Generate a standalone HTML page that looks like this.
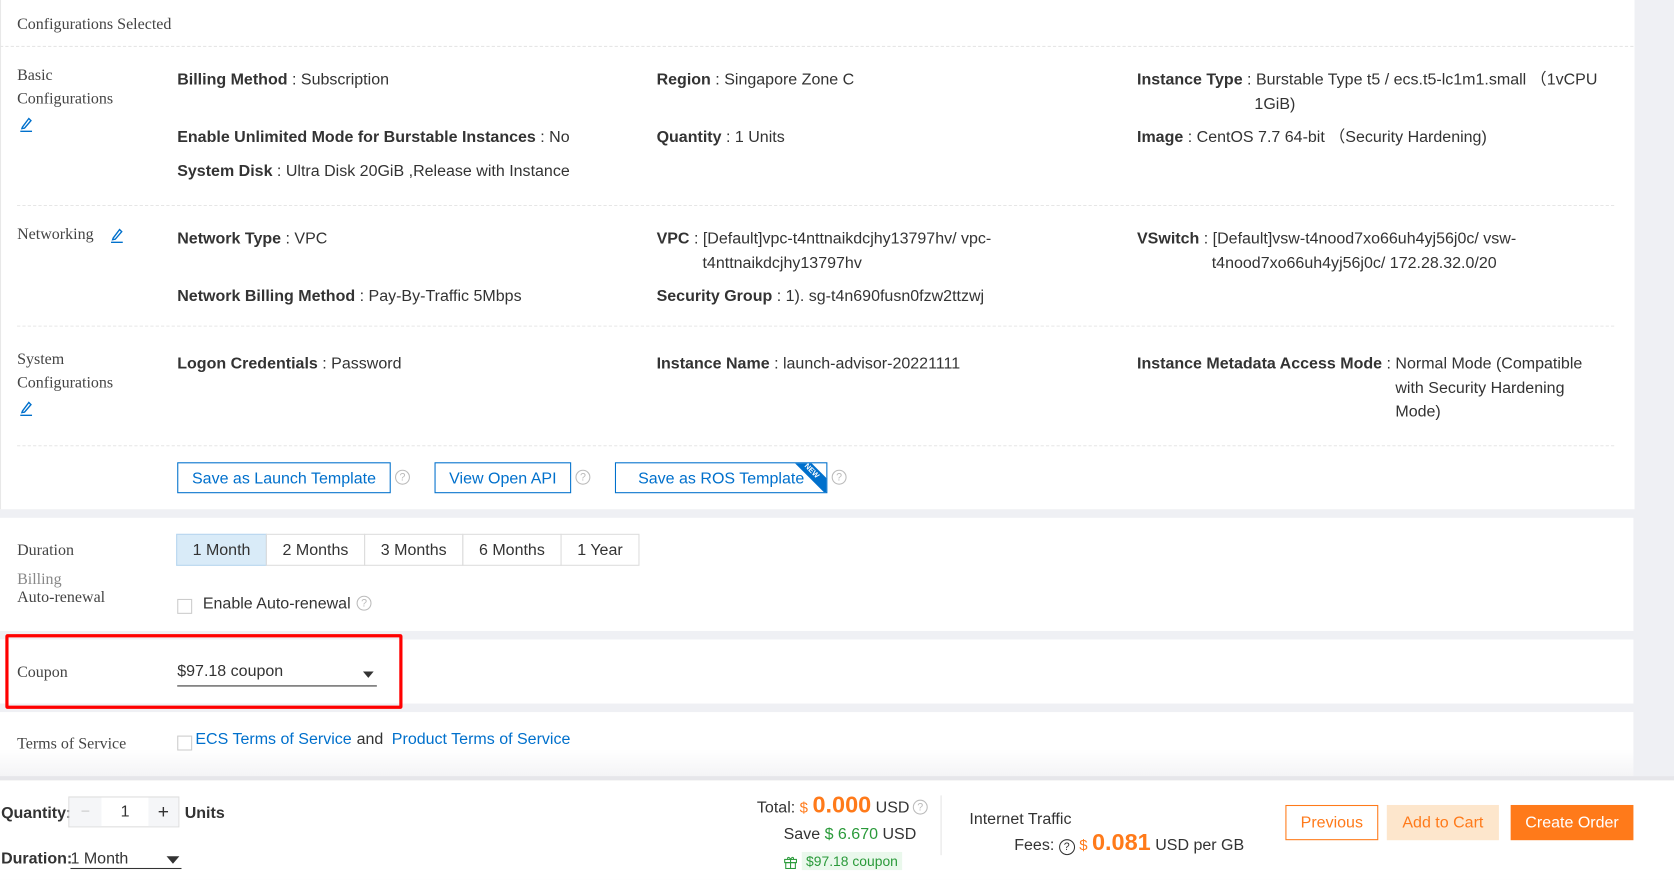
<!DOCTYPE html>
<html><head><meta charset="utf-8"><style>
html,body{margin:0;padding:0;width:1674px;height:880px;overflow:hidden;background:#fff}
#w{position:absolute;left:0;top:0;width:1568px;height:824px;transform:scale(1.0676);transform-origin:0 0;background:#eff0f4;font-family:"Liberation Sans",sans-serif;font-size:15px;color:#333}
.a{position:absolute;white-space:nowrap}
.p{position:absolute;left:0;width:1530px;background:#fff}
.lab{position:absolute;font-family:"Liberation Serif",serif;font-size:15px;color:#444;line-height:22px}
.sep{position:absolute;left:0;height:0;border-top:1px dashed #e6e6e6}
b{font-weight:bold;color:#333}
.v{position:absolute;line-height:22.5px}
.btn{position:absolute;border:1px solid #0070cc;color:#0070cc;height:29px;line-height:29px;text-align:center;box-sizing:border-box;font-size:15px;background:#fff}
.q{position:absolute;width:14px;height:14px;border:1px solid #bbb;border-radius:50%;color:#bbb;font-size:10px;line-height:14px;text-align:center;box-sizing:border-box}
.tab{position:absolute;top:500px;height:30px;line-height:30px;border:1px solid #ddd;text-align:center;box-sizing:border-box;color:#333}
.pen{position:absolute}
</style></head><body><div id="w">
<div class="p" style="top:0;height:477px;border-left:1px solid #e8e8e8"></div>
<div class="p" style="top:485px;height:106px"></div>
<div class="p" style="top:599px;height:60px"></div>
<div class="p" style="top:667px;height:60px;background:linear-gradient(#fff 0,#fff 35px,#f4f4f6 60px)"></div>
<div style="position:absolute;left:0;top:727px;width:1568px;height:4px;background:#e6e6ea"></div>
<div style="position:absolute;left:0;top:731px;width:1568px;height:93px;background:#fff"></div>

<div class="a lab" style="left:16px;top:12px">Configurations Selected</div>
<div class="sep" style="top:43px;width:1530px"></div>

<div class="lab" style="left:16px;top:60px">Basic<br>Configurations</div>
<svg class="pen" style="left:17px;top:108px" width="16" height="16" viewBox="0 0 16 16"><path d="M4 11 L10 3 L12 5 L6 12 L3.5 12.5 Z" fill="none" stroke="#0070cc" stroke-width="1.3"/><path d="M2 15 H13" stroke="#0070cc" stroke-width="1.3"/></svg>
<div class="v a" style="left:166px;top:64px"><b>Billing Method</b> : Subscription</div>
<div class="v a" style="left:615px;top:64px"><b>Region</b> : Singapore Zone C</div>
<div class="v" style="left:1065px;top:64px;width:450px"><b>Instance Type</b> : Burstable Type t5 / ecs.t5-lc1m1.small （1vCPU<br><span style="padding-left:110px">1GiB)</span></div>
<div class="v a" style="left:166px;top:118px"><b>Enable Unlimited Mode for Burstable Instances</b> : No</div>
<div class="v a" style="left:615px;top:118px"><b>Quantity</b> : 1 Units</div>
<div class="v a" style="left:1065px;top:118px"><b>Image</b> : CentOS 7.7 64-bit （Security Hardening)</div>
<div class="v a" style="left:166px;top:150px"><b>System Disk</b> : Ultra Disk 20GiB ,Release with Instance</div>
<div class="sep" style="top:192px;left:16px;width:1496px"></div>

<div class="a lab" style="left:16px;top:209px">Networking</div>
<svg class="pen" style="left:102px;top:212px" width="16" height="16" viewBox="0 0 16 16"><path d="M4 11 L10 3 L12 5 L6 12 L3.5 12.5 Z" fill="none" stroke="#0070cc" stroke-width="1.3"/><path d="M2 15 H13" stroke="#0070cc" stroke-width="1.3"/></svg>
<div class="v a" style="left:166px;top:213px"><b>Network Type</b> : VPC</div>
<div class="v a" style="left:615px;top:213px"><b>VPC</b> : [Default]vpc-t4nttnaikdcjhy13797hv/ vpc-<br><span style="padding-left:43px">t4nttnaikdcjhy13797hv</span></div>
<div class="v a" style="left:1065px;top:213px"><b>VSwitch</b> : [Default]vsw-t4nood7xo66uh4yj56j0c/ vsw-<br><span style="padding-left:70px">t4nood7xo66uh4yj56j0c/ 172.28.32.0/20</span></div>
<div class="v a" style="left:166px;top:267px"><b>Network Billing Method</b> : Pay-By-Traffic 5Mbps</div>
<div class="v a" style="left:615px;top:267px"><b>Security Group</b> : 1). sg-t4n690fusn0fzw2ttzwj</div>
<div class="sep" style="top:305px;left:16px;width:1496px"></div>

<div class="lab" style="left:16px;top:326px">System<br>Configurations</div>
<svg class="pen" style="left:17px;top:374px" width="16" height="16" viewBox="0 0 16 16"><path d="M4 11 L10 3 L12 5 L6 12 L3.5 12.5 Z" fill="none" stroke="#0070cc" stroke-width="1.3"/><path d="M2 15 H13" stroke="#0070cc" stroke-width="1.3"/></svg>
<div class="v a" style="left:166px;top:330px"><b>Logon Credentials</b> : Password</div>
<div class="v a" style="left:615px;top:330px"><b>Instance Name</b> : launch-advisor-20221111</div>
<div class="v a" style="left:1065px;top:330px"><b>Instance Metadata Access Mode</b> : Normal Mode (Compatible<br><span style="padding-left:242px">with Security Hardening</span><br><span style="padding-left:242px">Mode)</span></div>
<div class="sep" style="top:417px;left:16px;width:1496px"></div>

<div class="btn" style="left:166px;top:433px;width:200px">Save as Launch Template</div>
<div class="q" style="left:370px;top:440px">?</div>
<div class="btn" style="left:407px;top:433px;width:128px">View Open API</div>
<div class="q" style="left:539px;top:440px">?</div>
<div class="btn" style="left:576px;top:433px;width:199px;overflow:hidden">Save as ROS Template
<div style="position:absolute;right:-14px;top:2px;width:56px;height:11px;background:#0070cc;color:#fff;font-size:7px;line-height:11px;transform:rotate(45deg);text-align:center;font-weight:bold">NEW</div></div>
<div class="q" style="left:779px;top:440px">?</div>

<div class="a lab" style="left:16px;top:505px">Duration</div>
<div class="tab" style="left:165px;width:85px;background:#d9ebf8;border-color:#b8d6ef">1 Month</div>
<div class="tab" style="left:249px;width:93px">2 Months</div>
<div class="tab" style="left:341px;width:93px">3 Months</div>
<div class="tab" style="left:433px;width:93px">6 Months</div>
<div class="tab" style="left:525px;width:74px">1 Year</div>
<div class="lab" style="left:16px;top:535px;line-height:17px"><span style="color:#888">Billing</span><br>Auto-renewal</div>
<div class="a" style="left:166px;top:561px;width:12px;height:12px;border:1px solid #ccc"></div>
<div class="a" style="left:190px;top:557px">Enable Auto-renewal</div>
<div class="q" style="left:334px;top:558px">?</div>

<div class="a" style="left:5px;top:594px;width:366px;height:64px;border:3px solid #f00;border-radius:2px"></div>
<div class="a lab" style="left:16px;top:619px">Coupon</div>
<div class="a" style="left:166px;top:620px">$97.18 coupon</div>
<div class="a" style="left:340px;top:629px;width:0;height:0;border-left:5px solid transparent;border-right:5px solid transparent;border-top:6px solid #333"></div>
<div class="a" style="left:166px;top:642px;width:187px;border-top:1px solid #333"></div>

<div class="a lab" style="left:16px;top:686px">Terms of Service</div>
<div class="a" style="left:166px;top:689px;width:12px;height:12px;border:1px solid #ccc"></div>
<div class="a" style="left:183px;top:684px;color:#0070cc">ECS Terms of Service</div>
<div class="a" style="left:334px;top:684px">and</div>
<div class="a" style="left:367px;top:684px;color:#0070cc">Product Terms of Service</div>

<div class="a" style="left:1px;top:753px;font-size:15px;font-weight:bold;color:#333">Quantity:</div>
<div class="a" style="left:64px;top:746px;width:104px;height:29px;border:1px solid #ddd;box-sizing:border-box">
<div class="a" style="left:0;top:0;width:30px;height:27px;background:#f5f6f8;color:#ccc;text-align:center;line-height:27px">−</div>
<div class="a" style="left:48px;top:0;line-height:27px">1</div>
<div class="a" style="left:74px;top:0;width:28px;height:27px;background:#f5f6f8;color:#333;text-align:center;line-height:27px;font-size:18px">+</div></div>
<div class="a" style="left:173px;top:753px;font-weight:bold">Units</div>
<div class="a" style="left:1px;top:796px;font-weight:bold">Duration: </div>
<div class="a" style="left:66px;top:796px">1 Month</div>
<div class="a" style="left:156px;top:802px;width:0;height:0;border-left:6px solid transparent;border-right:6px solid transparent;border-top:7px solid #333"></div>
<div class="a" style="left:66px;top:813px;width:104px;border-top:1px solid #333"></div>

<div class="a" style="left:709px;top:741px">Total: <span style="color:#ff7a1a;font-size:14px">$</span> <span style="color:#ff7a1a;font-size:22px;font-weight:bold">0.000</span> USD</div>
<div class="q" style="left:855px;top:749px">?</div>
<div class="a" style="left:734px;top:773px">Save <span style="color:#2a9a3a">$ 6.670</span> USD</div>
<svg class="a" style="left:734px;top:801px" width="13" height="13" viewBox="0 0 13 13"><rect x="1" y="4" width="11" height="3" fill="none" stroke="#2a9a3a"/><rect x="2" y="7" width="9" height="5.5" fill="none" stroke="#2a9a3a"/><path d="M6.5 4v8.5M6.5 4C5 1 3 2 4 4M6.5 4C8 1 10 2 9 4" fill="none" stroke="#2a9a3a"/></svg>
<div class="a" style="left:751px;top:798px;color:#2a9a3a;font-size:13px;background:#eaf8ec;padding:1px 4px">$97.18 coupon</div>
<div class="a" style="left:881px;top:745px;height:56px;border-left:1px solid #e5e5e5"></div>
<div class="a" style="left:908px;top:759px">Internet Traffic</div>
<div class="a" style="left:950px;top:776px">Fees: <span style="display:inline-block;width:13px;height:13px;border:1px solid #333;border-radius:50%;font-size:10px;line-height:13px;text-align:center">?</span> <span style="color:#ff7a1a;font-size:14px">$</span> <span style="color:#ff7a1a;font-size:22px;font-weight:bold">0.081</span> USD per GB</div>

<div class="a" style="left:1204px;top:754px;width:87px;height:33px;border:1px solid #ff7a1a;box-sizing:border-box;color:#ff7a1a;text-align:center;line-height:31px">Previous</div>
<div class="a" style="left:1299px;top:754px;width:105px;height:33px;background:#fde6cc;color:#ff7a1a;text-align:center;line-height:33px">Add to Cart</div>
<div class="a" style="left:1415px;top:754px;width:115px;height:33px;background:#ff7a1a;color:#fff;text-align:center;line-height:33px">Create Order</div>
</div></body></html>
